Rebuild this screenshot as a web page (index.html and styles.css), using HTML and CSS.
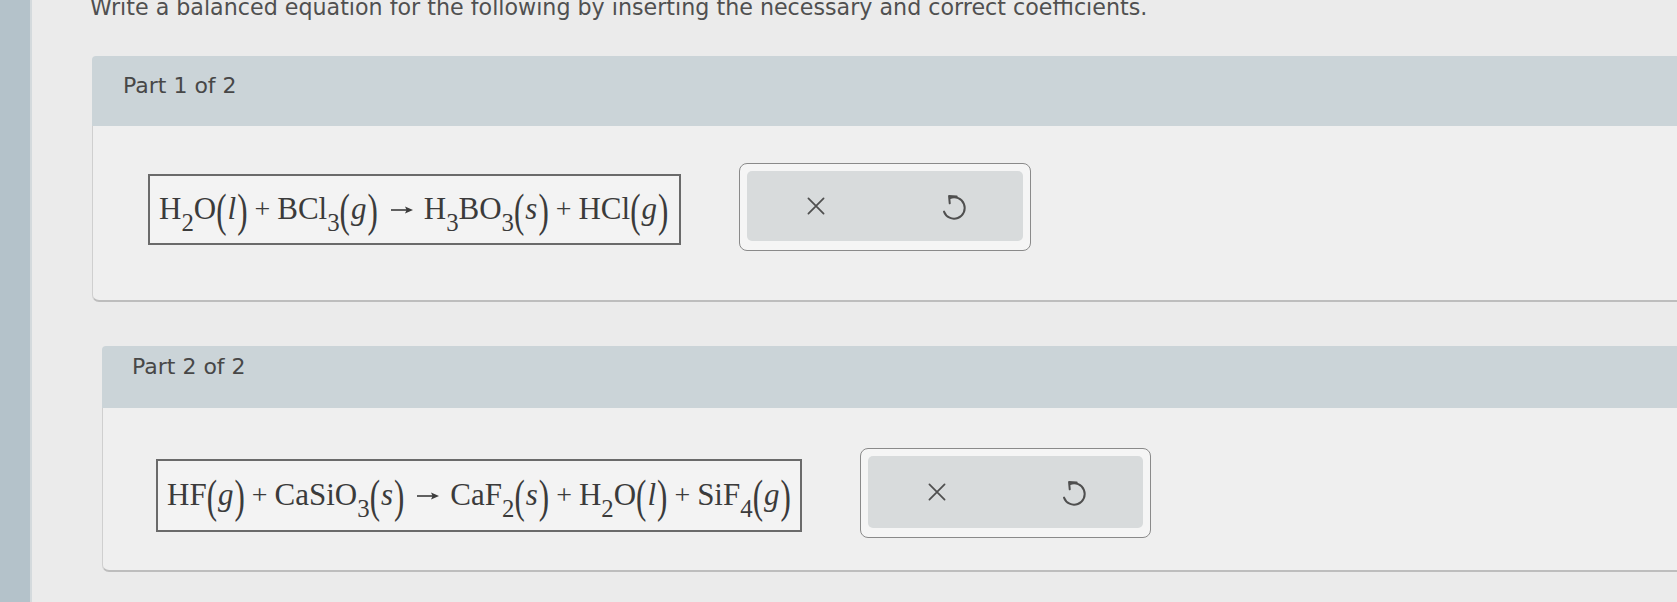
FILE: index.html
```html
<!DOCTYPE html>
<html lang="en">
<head>
<meta charset="utf-8">
<title>Balance equations</title>
<link rel="stylesheet" href="styles.css">
</head>
<body>
<div class="screen">
  <div class="edge"></div>
  <main class="page">
    <p class="prompt">Write a balanced equation for the following by inserting the necessary and correct coefficients.</p>

    <section class="part part-1">
      <div class="part-head">Part 1 of 2</div>
      <div class="part-body">
        <div class="answer-row">
          <div class="eq-box eq-1">
            <span class="chem">H<sub>2</sub>O<span class="paren">(</span><i>l</i><span class="paren">)</span></span>
            <span class="op">+</span>
            <span class="chem">BCl<sub>3</sub><span class="paren">(</span><i>g</i><span class="paren">)</span></span>
            <svg class="arrow" viewBox="0 0 24 10" width="24" height="10" aria-label="yields"><path d="M1 5 H17" /><polygon points="23,5 15,1.6 16.6,5 15,8.4" /></svg>
            <span class="chem">H<sub>3</sub>BO<sub>3</sub><span class="paren">(</span><i>s</i><span class="paren">)</span></span>
            <span class="op">+</span>
            <span class="chem">HCl<span class="paren">(</span><i>g</i><span class="paren">)</span></span>
          </div>
          <div class="tools tools-1">
            <div class="tools-inner">
              <button class="tool" aria-label="Clear">
                <svg viewBox="0 0 24 24" width="28" height="28"><path d="M5.5 5.5 L18.5 18.5 M18.5 5.5 L5.5 18.5" /></svg>
              </button>
              <button class="tool" aria-label="Undo">
                <svg viewBox="0 0 24 24" width="32" height="32"><path d="M14 4.8 L8.3 4.5 L8.8 10" /><path d="M9 6.1 A8 8 0 1 1 4.5 16.2" /></svg>
              </button>
            </div>
          </div>
        </div>
      </div>
    </section>

    <section class="part part-2">
      <div class="part-head">Part 2 of 2</div>
      <div class="part-body">
        <div class="answer-row">
          <div class="eq-box eq-2">
            <span class="chem">HF<span class="paren">(</span><i>g</i><span class="paren">)</span></span>
            <span class="op">+</span>
            <span class="chem">CaSiO<sub>3</sub><span class="paren">(</span><i>s</i><span class="paren">)</span></span>
            <svg class="arrow" viewBox="0 0 24 10" width="24" height="10" aria-label="yields"><path d="M1 5 H17" /><polygon points="23,5 15,1.6 16.6,5 15,8.4" /></svg>
            <span class="chem">CaF<sub>2</sub><span class="paren">(</span><i>s</i><span class="paren">)</span></span>
            <span class="op">+</span>
            <span class="chem">H<sub>2</sub>O<span class="paren">(</span><i>l</i><span class="paren">)</span></span>
            <span class="op">+</span>
            <span class="chem">SiF<sub>4</sub><span class="paren">(</span><i>g</i><span class="paren">)</span></span>
          </div>
          <div class="tools tools-2">
            <div class="tools-inner">
              <button class="tool" aria-label="Clear">
                <svg viewBox="0 0 24 24" width="28" height="28"><path d="M5.5 5.5 L18.5 18.5 M18.5 5.5 L5.5 18.5" /></svg>
              </button>
              <button class="tool" aria-label="Undo">
                <svg viewBox="0 0 24 24" width="32" height="32"><path d="M14 4.8 L8.3 4.5 L8.8 10" /><path d="M9 6.1 A8 8 0 1 1 4.5 16.2" /></svg>
              </button>
            </div>
          </div>
        </div>
      </div>
    </section>
  </main>
</div>
</body>
</html>
```

FILE: styles.css
```css
html, body {
  margin: 0;
  padding: 0;
}

body {
  width: 1677px;
  height: 602px;
  overflow: hidden;
  background: #eaeaea;
  font-family: "DejaVu Sans", Verdana, sans-serif;
}

.screen {
  display: flex;
  height: 602px;
  overflow: hidden;
}

.edge {
  flex: 0 0 30px;
  background: #b4c2ca;
  border-right: 2px solid #d4dadd;
}

.page {
  flex: 1;
  min-width: 0;
  padding-left: 60px;
  background: #ebebeb;
}

.prompt {
  margin: -6px 0 0 -2px;
  font-size: 22.2px;
  line-height: 26px;
  color: #505050;
  white-space: nowrap;
}

.part {
  display: flex;
  flex-direction: column;
}

.part-1 {
  margin-top: 36px;
}

.part-2 {
  margin-top: 44px;
  margin-left: 10px;
}

.part-head {
  background: #cbd4d8;
  border-top-left-radius: 4px;
  color: #474747;
  font-size: 22px;
  line-height: 28px;
  padding-left: 31px;
}

.part-1 .part-head {
  height: 70px;
  padding-top: 16px;
  box-sizing: border-box;
}

.part-2 .part-head {
  height: 62px;
  padding-top: 7px;
  padding-left: 30px;
  box-sizing: border-box;
}

.part-body {
  background: #efefef;
  border-left: 1.5px solid #cfcfcf;
  border-bottom: 2px solid #bdbdbd;
  border-bottom-left-radius: 7px;
  box-sizing: border-box;
}

.part-1 .part-body {
  height: 176px;
  padding: 37px 0 0 55px;
}

.part-2 .part-body {
  height: 164px;
  padding: 40px 0 0 53px;
}

.answer-row {
  display: flex;
  align-items: center;
  gap: 58px;
}

.eq-box {
  box-sizing: border-box;
  height: 71px;
  border: 2px solid #6a6a6a;
  background: #f3f3f3;
  display: flex;
  align-items: center;
  padding-left: 9px;
  font-family: "Liberation Serif", "Times New Roman", serif;
  font-size: 31px;
  color: #3b3b3b;
  white-space: nowrap;
  margin-top: 4px;
}

.eq-1 {
  width: 533px;
}

.eq-2 {
  width: 646px;
  height: 73px;
}

.chem {
  display: inline-flex;
  align-items: center;
}

.chem sub {
  font-size: 0.8em;
  position: relative;
  top: 0.6em;
  vertical-align: baseline;
  line-height: 1;
}

.chem i {
  font-style: italic;
  padding: 0 1px;
}

.paren {
  display: inline-block;
  font-size: 1em;
  transform: scaleY(1.5);
  line-height: 1;
  position: relative;
  top: 1px;
}

.op {
  margin: 0 7px;
  font-size: 0.9em;
}

.arrow {
  margin: 2px 10px 0 12px;
  flex: 0 0 auto;
}

.arrow path {
  fill: none;
  stroke: #3b3b3b;
  stroke-width: 1.6;
}

.arrow polygon {
  fill: #3b3b3b;
}

.tools {
  box-sizing: border-box;
  height: 88px;
  border: 1.5px solid #8a8a8a;
  border-radius: 8px;
  background: #f5f5f5;
  padding: 7px 7px 9px 7px;
}

.tools-1 {
  width: 292px;
}

.tools-2 {
  width: 291px;
  height: 90px;
}

.tools-inner {
  height: 100%;
  background: #d8dbdc;
  border-radius: 5px;
  display: flex;
  align-items: center;
  justify-content: space-around;
}

.tool {
  border: 0;
  background: transparent;
  padding: 0;
  width: 40px;
  height: 40px;
  display: flex;
  align-items: center;
  justify-content: center;
}

.tool svg {
  fill: none;
  stroke: #4f4f4f;
  stroke-width: 1.5;
  stroke-linecap: round;
  stroke-linejoin: round;
}
```
